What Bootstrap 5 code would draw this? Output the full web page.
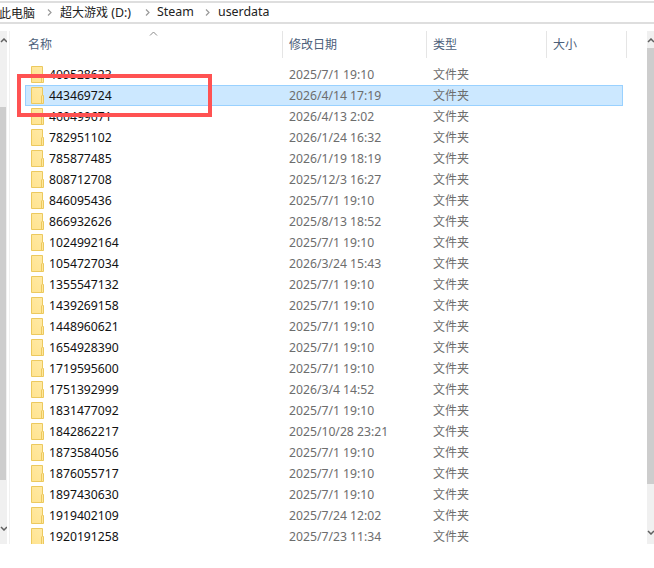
<!DOCTYPE html>
<html lang="zh">
<head>
<meta charset="utf-8">
<title>userdata</title>
<link href="https://cdn.jsdelivr.net/npm/bootstrap@5.3.0/dist/css/bootstrap.min.css" rel="stylesheet">
<style>
html,body{height:568px;overflow:hidden;background:#fff}
body{font-family:"Noto Sans","Noto Sans CJK SC",sans-serif;font-size:12.2px;color:#111;line-height:1}
.crumbs{margin-top:1px;height:23px;border-top:2px solid #dedede;border-bottom:2px solid #dedede;padding-left:0;font-size:12.4px;color:#222;white-space:nowrap;overflow:hidden}
.crumbs span{display:block}
.crumbs .c1{margin-left:-1px;width:48px}
.crumbs .sep{flex:none}
.crumbs .c2{width:85px}
.crumbs .c3{width:48px}
.cjk{font-family:"Noto Sans CJK SC",sans-serif;font-size:12px}
.sep1{width:13px}.sep2{width:12px}.sep3{width:13px}
.pane{margin-top:7px;height:513px}
.vbar{width:7px;flex:none;background:#f0f0f0;position:relative}
.vbar svg{display:block;margin-top:7px}
.thumb{background:#cdcdcd;width:100%}
.thumb-l{margin-top:64px;height:373px;width:6px}
.thumb-r{margin-top:5px;height:436px}
.vbar .arrow-end{margin-top:46px}
.filelist{flex:1;min-width:0;overflow:hidden;margin-left:2px;border-left:1px solid #f0f0f0;padding-left:15px;margin-right:0}
.colhead{height:27px;margin-bottom:6px;color:#4c607a;position:relative}
.hcell{height:27px;border-right:1px solid #e5e5e5;padding-top:7px;flex:none}
.hc-a{width:258px;padding-left:3px}.hc-b{width:144px;padding-left:6px}.hc-c{width:120px;padding-left:6px}.hc-d{width:80px;padding-left:6px}
.sortcaret{position:absolute;left:124px;top:0}
.frow{height:21px;width:598px;border:1px solid transparent}
.frow.picked{background:#cce8ff;border-color:#99d1ff}
.fname{width:263px;padding-left:5px;gap:5px;flex:none}
.fname span{padding-top:2px}
.fdate{width:144px;color:#6d6d6d;flex:none;padding-top:2px}
.ftype{color:#6d6d6d;font-size:12px;font-family:"Noto Sans CJK SC",sans-serif;padding-bottom:2px}
.fname svg{flex:none}
.redmark{position:absolute;left:17px;top:74px;width:195px;height:43px;border:4px solid #ff5252;pointer-events:none}
</style>
</head>
<body class="position-relative">
<div class="crumbs d-flex align-items-center">
  <span class="c1 cjk">此电脑</span>
  <span class="sep sep1"><svg width="5" height="7" viewBox="0 0 5 7" class="d-block"><path d="M1 0.5 4 3.5 1 6.5" fill="none" stroke="#9a9a9a" stroke-width="1.2"/></svg></span>
  <span class="c2"><span class="d-inline cjk">超大游戏</span> (D:)</span>
  <span class="sep sep2"><svg width="5" height="7" viewBox="0 0 5 7" class="d-block"><path d="M1 0.5 4 3.5 1 6.5" fill="none" stroke="#9a9a9a" stroke-width="1.2"/></svg></span>
  <span class="c3">Steam</span>
  <span class="sep sep3"><svg width="5" height="7" viewBox="0 0 5 7" class="d-block"><path d="M1 0.5 4 3.5 1 6.5" fill="none" stroke="#9a9a9a" stroke-width="1.2"/></svg></span>
  <span>userdata</span>
</div>
<div class="pane d-flex">
  <div class="vbar">
    <svg width="7" height="5" viewBox="0 0 7 5"><path d="M1 4 4 1 7 4" fill="none" stroke="#606060" stroke-width="1.5"/></svg>
    <div class="thumb thumb-l"></div>
    <svg class="arrow-end" width="7" height="5" viewBox="0 0 7 5"><path d="M1 1 4 4 7 1" fill="none" stroke="#606060" stroke-width="1.5"/></svg>
  </div>
  <div class="filelist">
    <div class="colhead d-flex cjk">
      <div class="hcell hc-a">名称</div><div class="hcell hc-b">修改日期</div><div class="hcell hc-c">类型</div><div class="hcell hc-d">大小</div>
      <svg class="sortcaret" width="9" height="5" viewBox="0 0 9 5"><path d="M1 4.5 4.5 1 8 4.5" fill="none" stroke="#8a8a8a"/></svg>
    </div>
    <svg width="0" height="0" class="position-absolute"><defs>
      <linearGradient id="fg" x1="1" y1="0" x2="0" y2="1"><stop offset="0" stop-color="#ffeaa6"/><stop offset="1" stop-color="#ffe38f"/></linearGradient>
      <symbol id="folder" viewBox="0 0 13 17"><path d="M.5.5H11.5V8.5H12.5V16.5H.5Z" fill="url(#fg)" stroke="#ecc95e"/><path d="M10.5 8.5V16.5" fill="none" stroke="#ecc95e"/></symbol>
    </defs></svg>
    <div class="frow d-flex align-items-center"><div class="fname d-flex align-items-center"><svg width="13" height="17"><use href="#folder"/></svg><span>409528623</span></div><div class="fdate">2025/7/1 19:10</div><div class="ftype">文件夹</div></div>
    <div class="frow picked d-flex align-items-center"><div class="fname d-flex align-items-center"><svg width="13" height="17"><use href="#folder"/></svg><span>443469724</span></div><div class="fdate">2026/4/14 17:19</div><div class="ftype">文件夹</div></div>
    <div class="frow d-flex align-items-center"><div class="fname d-flex align-items-center"><svg width="13" height="17"><use href="#folder"/></svg><span>460499671</span></div><div class="fdate">2026/4/13 2:02</div><div class="ftype">文件夹</div></div>
    <div class="frow d-flex align-items-center"><div class="fname d-flex align-items-center"><svg width="13" height="17"><use href="#folder"/></svg><span>782951102</span></div><div class="fdate">2026/1/24 16:32</div><div class="ftype">文件夹</div></div>
    <div class="frow d-flex align-items-center"><div class="fname d-flex align-items-center"><svg width="13" height="17"><use href="#folder"/></svg><span>785877485</span></div><div class="fdate">2026/1/19 18:19</div><div class="ftype">文件夹</div></div>
    <div class="frow d-flex align-items-center"><div class="fname d-flex align-items-center"><svg width="13" height="17"><use href="#folder"/></svg><span>808712708</span></div><div class="fdate">2025/12/3 16:27</div><div class="ftype">文件夹</div></div>
    <div class="frow d-flex align-items-center"><div class="fname d-flex align-items-center"><svg width="13" height="17"><use href="#folder"/></svg><span>846095436</span></div><div class="fdate">2025/7/1 19:10</div><div class="ftype">文件夹</div></div>
    <div class="frow d-flex align-items-center"><div class="fname d-flex align-items-center"><svg width="13" height="17"><use href="#folder"/></svg><span>866932626</span></div><div class="fdate">2025/8/13 18:52</div><div class="ftype">文件夹</div></div>
    <div class="frow d-flex align-items-center"><div class="fname d-flex align-items-center"><svg width="13" height="17"><use href="#folder"/></svg><span>1024992164</span></div><div class="fdate">2025/7/1 19:10</div><div class="ftype">文件夹</div></div>
    <div class="frow d-flex align-items-center"><div class="fname d-flex align-items-center"><svg width="13" height="17"><use href="#folder"/></svg><span>1054727034</span></div><div class="fdate">2026/3/24 15:43</div><div class="ftype">文件夹</div></div>
    <div class="frow d-flex align-items-center"><div class="fname d-flex align-items-center"><svg width="13" height="17"><use href="#folder"/></svg><span>1355547132</span></div><div class="fdate">2025/7/1 19:10</div><div class="ftype">文件夹</div></div>
    <div class="frow d-flex align-items-center"><div class="fname d-flex align-items-center"><svg width="13" height="17"><use href="#folder"/></svg><span>1439269158</span></div><div class="fdate">2025/7/1 19:10</div><div class="ftype">文件夹</div></div>
    <div class="frow d-flex align-items-center"><div class="fname d-flex align-items-center"><svg width="13" height="17"><use href="#folder"/></svg><span>1448960621</span></div><div class="fdate">2025/7/1 19:10</div><div class="ftype">文件夹</div></div>
    <div class="frow d-flex align-items-center"><div class="fname d-flex align-items-center"><svg width="13" height="17"><use href="#folder"/></svg><span>1654928390</span></div><div class="fdate">2025/7/1 19:10</div><div class="ftype">文件夹</div></div>
    <div class="frow d-flex align-items-center"><div class="fname d-flex align-items-center"><svg width="13" height="17"><use href="#folder"/></svg><span>1719595600</span></div><div class="fdate">2025/7/1 19:10</div><div class="ftype">文件夹</div></div>
    <div class="frow d-flex align-items-center"><div class="fname d-flex align-items-center"><svg width="13" height="17"><use href="#folder"/></svg><span>1751392999</span></div><div class="fdate">2026/3/4 14:52</div><div class="ftype">文件夹</div></div>
    <div class="frow d-flex align-items-center"><div class="fname d-flex align-items-center"><svg width="13" height="17"><use href="#folder"/></svg><span>1831477092</span></div><div class="fdate">2025/7/1 19:10</div><div class="ftype">文件夹</div></div>
    <div class="frow d-flex align-items-center"><div class="fname d-flex align-items-center"><svg width="13" height="17"><use href="#folder"/></svg><span>1842862217</span></div><div class="fdate">2025/10/28 23:21</div><div class="ftype">文件夹</div></div>
    <div class="frow d-flex align-items-center"><div class="fname d-flex align-items-center"><svg width="13" height="17"><use href="#folder"/></svg><span>1873584056</span></div><div class="fdate">2025/7/1 19:10</div><div class="ftype">文件夹</div></div>
    <div class="frow d-flex align-items-center"><div class="fname d-flex align-items-center"><svg width="13" height="17"><use href="#folder"/></svg><span>1876055717</span></div><div class="fdate">2025/7/1 19:10</div><div class="ftype">文件夹</div></div>
    <div class="frow d-flex align-items-center"><div class="fname d-flex align-items-center"><svg width="13" height="17"><use href="#folder"/></svg><span>1897430630</span></div><div class="fdate">2025/7/1 19:10</div><div class="ftype">文件夹</div></div>
    <div class="frow d-flex align-items-center"><div class="fname d-flex align-items-center"><svg width="13" height="17"><use href="#folder"/></svg><span>1919402109</span></div><div class="fdate">2025/7/24 12:02</div><div class="ftype">文件夹</div></div>
    <div class="frow d-flex align-items-center"><div class="fname d-flex align-items-center"><svg width="13" height="17"><use href="#folder"/></svg><span>1920191258</span></div><div class="fdate">2025/7/23 11:34</div><div class="ftype">文件夹</div></div>
  </div>
  <div class="vbar ms-auto">
    <svg width="7" height="5" viewBox="0 0 7 5"><path d="M1 4 4 1 7 4" fill="none" stroke="#606060" stroke-width="1.5"/></svg>
    <div class="thumb thumb-r"></div>
    <svg class="arrow-end" width="7" height="5" viewBox="0 0 7 5"><path d="M1 1 4 4 7 1" fill="none" stroke="#606060" stroke-width="1.5"/></svg>
  </div>
</div>
<div class="redmark"></div>
</body>
</html>
